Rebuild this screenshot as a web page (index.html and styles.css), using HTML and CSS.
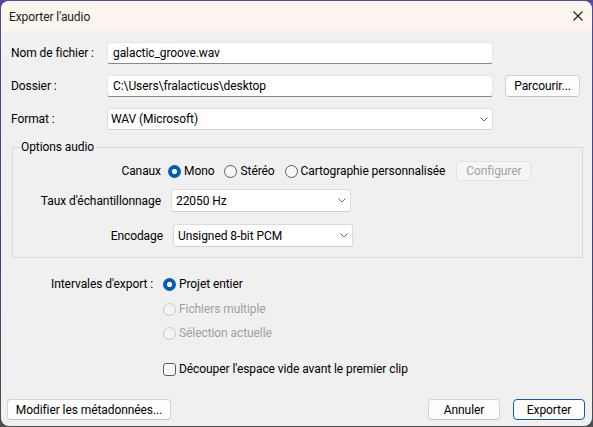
FILE: index.html
```html
<!DOCTYPE html>
<html lang="fr">
<head>
<meta charset="utf-8">
<title>Exporter l'audio</title>
<link rel="stylesheet" href="styles.css">
</head>
<body>
<div class="window">
  <div class="titlebar">
    <span class="title">Exporter l'audio</span>
    <svg class="close" width="10" height="10" viewBox="0 0 10 10"><path d="M0.5 0.5 L9.5 9.5 M9.5 0.5 L0.5 9.5" stroke="#1b1b1b" stroke-width="1.1" fill="none"/></svg>
  </div>
  <div class="content">
    <div class="filegrid">
      <div class="lbl">Nom de fichier :</div>
      <div class="textfield">galactic_groove.wav</div>
      <div></div>
      <div class="lbl">Dossier :</div>
      <div class="textfield">C:\Users\fralacticus\desktop</div>
      <div class="btn browse">Parcourir...</div>
      <div class="lbl">Format :</div>
      <div class="select format"><span>WAV (Microsoft)</span><svg class="chev" width="8" height="5" viewBox="0 0 8 5"><path d="M0.5 0.5 L4 4 L7.5 0.5" stroke="#6a6a6a" stroke-width="1" fill="none"/></svg></div>
      <div></div>
    </div>

    <div class="group">
      <div class="legend">Options audio</div>
      <div class="grow channels">
        <div class="glbl w148">Canaux</div>
        <div class="opt first"><span class="radio checked"></span><span>Mono</span></div>
        <div class="opt"><span class="radio"></span><span>Stéréo</span></div>
        <div class="opt"><span class="radio"></span><span>Cartographie personnalisée</span></div>
        <div class="btn disabled config">Configurer</div>
      </div>
      <div class="grow rate">
        <div class="glbl w148">Taux d'échantillonnage</div>
        <div class="select small"><span>22050 Hz</span><svg class="chev" width="8" height="5" viewBox="0 0 8 5"><path d="M0.5 0.5 L4 4 L7.5 0.5" stroke="#6a6a6a" stroke-width="1" fill="none"/></svg></div>
      </div>
      <div class="grow enc">
        <div class="glbl w150">Encodage</div>
        <div class="select small"><span>Unsigned 8-bit PCM</span><svg class="chev" width="8" height="5" viewBox="0 0 8 5"><path d="M0.5 0.5 L4 4 L7.5 0.5" stroke="#6a6a6a" stroke-width="1" fill="none"/></svg></div>
      </div>
    </div>

    <div class="ranges">
      <div class="lbl rlbl">Intervales d'export :</div>
      <div class="ropts">
        <div class="opt row1"><span class="radio checked"></span><span>Projet entier</span></div>
        <div class="opt row2 dis"><span class="radio off"></span><span>Fichiers multiple</span></div>
        <div class="opt row3 dis"><span class="radio off"></span><span>Sélection actuelle</span></div>
        <div class="opt row4"><span class="check"></span><span>Découper l'espace vide avant le premier clip</span></div>
      </div>
    </div>

    <div class="footer">
      <div class="btn meta">Modifier les métadonnées...</div>
      <div class="spacer"></div>
      <div class="btn action">Annuler</div>
      <div class="btn action default">Exporter</div>
    </div>
  </div>
</div>
</body>
</html>
```
FILE: styles.css
```css
html {
  background: linear-gradient(to bottom, #4c4ca6 0%, #3f3f88 55%, #4d4d52 100%);
  height: 100%;
}
body {
  margin: 1px;
  font-family: Roboto, "Segoe UI", sans-serif;
  font-size: 12px;
  line-height: 16px;
  letter-spacing: -0.08px;
  color: #000;
}
.window {
  width: 591px;
  height: 425px;
  border-radius: 8px;
  overflow: hidden;
  background: #f0f0f0;
  display: flex;
  flex-direction: column;
}
.titlebar {
  height: 30px;
  flex: none;
  background: #fbf5ee;
  display: flex;
  align-items: center;
  padding: 0 9px 0 8px;
}
.title {
  flex: 1;
  color: #1a1a1a;
  padding-top: 1px;
}
.close {
  display: block;
}
.content {
  flex: 1;
  display: flex;
  flex-direction: column;
  padding: 11px 0 0 10px;
}
.filegrid {
  display: grid;
  grid-template-columns: 96px 386px 87px;
  row-gap: 11px;
  align-items: center;
}
.lbl {
  white-space: nowrap;
}
.textfield {
  height: 22px;
  box-sizing: border-box;
  background: #fff;
  border: 1px solid #e6e6e6;
  border-bottom-color: #878787;
  border-radius: 3px;
  padding: 0 5px;
  display: flex;
  align-items: center;
}
.select {
  box-sizing: border-box;
  background: #fff;
  border: 1px solid #dcdcdc;
  border-bottom-color: #cfcfcf;
  border-radius: 3px;
  display: flex;
  align-items: center;
  padding: 0 4px 0 3px;
}
.select span { flex: 1; }
.select.format { height: 22px; }
.select.small { height: 23px; width: 180px; margin-left: 10px; padding-left: 4px; }
.chev { display: block; }

.btn {
  box-sizing: border-box;
  background: #fdfdfd;
  border: 1px solid #d3d3d3;
  border-bottom-color: #c2c2c2;
  border-radius: 4px;
  display: flex;
  align-items: center;
  justify-content: center;
  white-space: nowrap;
}
.browse {
  width: 75px;
  height: 22px;
  margin-left: 12px;
}
.btn.disabled {
  background: #f6f6f6;
  border-color: #e3e3e3;
  color: #a2a2a2;
}
.config {
  width: 75px;
  height: 20px;
  margin-left: 11px;
}

.group {
  position: relative;
  margin-top: 17px;
  margin-left: 1px;
  width: 571px;
  box-sizing: border-box;
  border: 1px solid #dadada;
  padding: 13px 0 10px 0;
}
.legend {
  position: absolute;
  top: -9px;
  left: 6px;
  padding: 0 2px;
  background: #f0f0f0;
}
.grow {
  display: flex;
  align-items: center;
}
.channels { height: 20px; }
.rate { margin-top: 8px; }
.enc { margin-top: 12px; }
.glbl {
  text-align: right;
  white-space: nowrap;
  flex: none;
}
.w148 { width: 148px; }
.w150 { width: 150px; }

.opt {
  display: flex;
  align-items: center;
  gap: 3px;
  white-space: nowrap;
  height: 16px;
}
.channels .opt { margin-left: 10px; }
.channels .opt.first { margin-left: 7px; }

.radio {
  width: 13px;
  height: 13px;
  box-sizing: border-box;
  border-radius: 50%;
  border: 1px solid #5d5d5d;
  background: #f7f7f7;
  flex: none;
}
.radio.checked {
  border: none;
  background: radial-gradient(circle, #ffffff 0 2.4px, #005fb8 2.9px);
}
.radio.off {
  border-color: #c6c6c6;
  background: #f3f3f3;
}
.check {
  width: 13px;
  height: 13px;
  box-sizing: border-box;
  border-radius: 3px;
  border: 1px solid #5d5d5d;
  background: #f7f7f7;
  flex: none;
}
.dis { color: #a0a0a0; }

.ranges {
  display: flex;
  margin-top: 18px;
}
.rlbl {
  width: 142px;
  text-align: right;
  margin-right: 10px;
  height: 16px;
}
.ropts {
  display: flex;
  flex-direction: column;
}
.row2 { margin-top: 9px; }
.row3 { margin-top: 8px; }
.row4 { margin-top: 20px; }

.footer {
  margin-top: auto;
  margin-left: -10px;
  display: flex;
  padding: 0 7px 6px 6px;
}
.footer .btn { height: 21px; }
.meta { width: 164px; }
.spacer { flex: 1; }
.action { width: 72px; }
.action.default {
  margin-left: 13px;
  border: 1px solid #0a5fb4;
}
```
